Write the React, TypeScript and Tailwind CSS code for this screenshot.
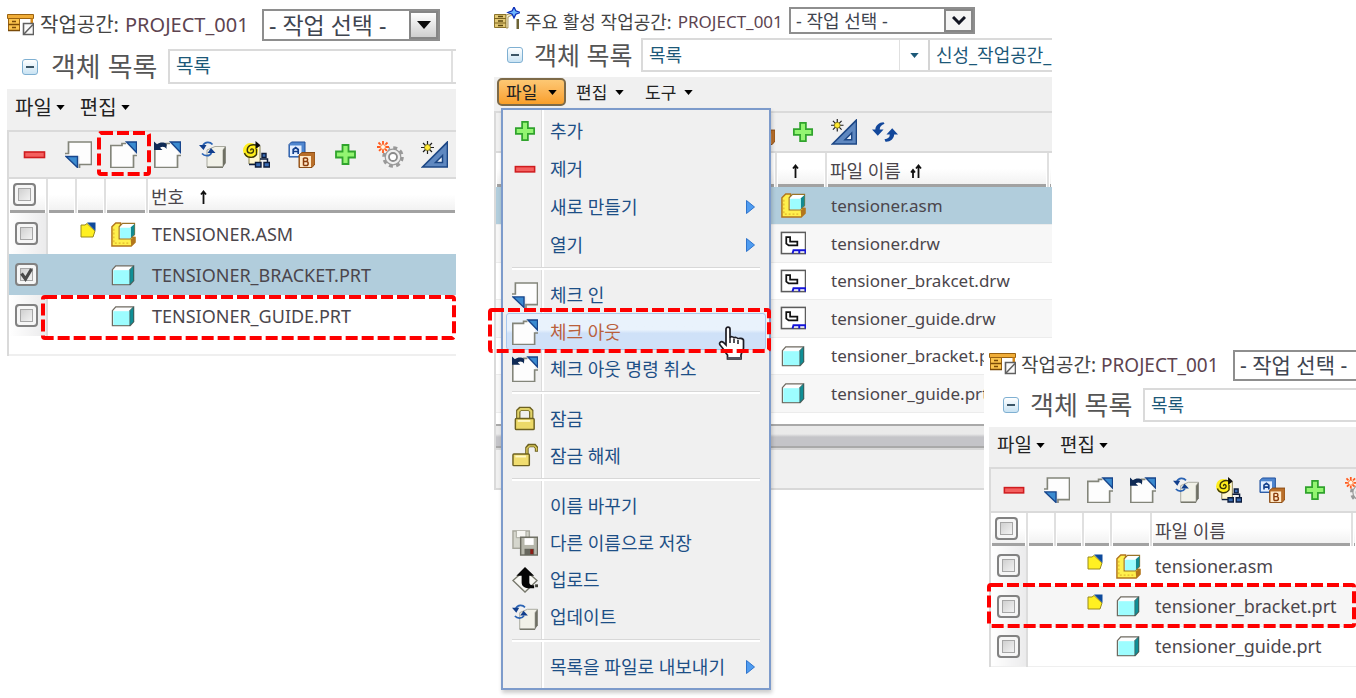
import { useState, type ReactNode } from "react";

type IconProps = { className?: string };

function Svg({ className = "size-[27px]", children }: { className?: string; children: ReactNode }) {
  return (
    <svg viewBox="0 0 27 27" className={`block shrink-0 ${className}`} fill="none" aria-hidden="true">
      {children}
    </svg>
  );
}

const MinusIcon = ({ className }: IconProps) => (
  <Svg className={className}>
    <rect x="3.5" y="11" width="20" height="5.5" fill="#f4605f" stroke="#cf1c1f" strokeWidth="1.6" />
  </Svg>
);

const PlusIcon = ({ className }: IconProps) => (
  <Svg className={className}>
    <path d="M10.5 4h6v6.500h6.500v6h-6.500v6.500h-6v-6.500H4v-6h6.500z" fill="#93f571" stroke="#30a32d" strokeWidth="1.8" />
  </Svg>
);

const CheckInIcon = ({ className }: IconProps) => (
  <Svg className={className}>
    <path d="M3.500 12V1H26.500v22.500H15V15H1v-3z" fill="#fdfdfd" />
    <path d="M0 12.500h3.500V1H26.500v22.500H14.500V27" stroke="#83857a" strokeWidth="1.700" />
    <path d="M1 15.500h11.500V26.500z" fill="#3b8bd0" stroke="#17458c" strokeWidth="1.400" />
  </Svg>
);

const CheckOutShape = () => (
  <>
    <path d="M.8 4.500H12V2.500h4l8 8v16H.8z" fill="#fdfdfd" />
    <path d="M16 2.500h-4v2H.8v22h22.700V14.500H27" stroke="#83857a" strokeWidth="1.700" />
    <path d="M16.500 1h10v10.500z" fill="#3b8bd0" stroke="#17458c" strokeWidth="1.400" />
  </>
);

const CheckOutIcon = ({ className }: IconProps) => (
  <Svg className={className}>
    <CheckOutShape />
  </Svg>
);

const UndoCheckOutIcon = ({ className }: IconProps) => (
  <Svg className={className}>
    <CheckOutShape />
    <path d="M0 .500v8.500h8.500L6 6.800c2-1.600 5-1.300 6.500 1.200V3C10 1 6 1 3 3.300z" fill="#0f2a55" />
  </Svg>
);

const UpdateIcon = ({ className }: IconProps) => (
  <Svg className={className}>
    <path d="M8 9l8-3.500h10.500L24 9v17H8z" fill="#f1f1e8" stroke="#a8a99e" strokeWidth="1" />
    <path d="M24 9l2.800-3.500V22L24 26z" fill="#6f7064" />
    <path d="M8 26.300h16" stroke="#77786c" strokeWidth="1.500" />
    <path d="M4 4.500C6 .500 11 .500 13.500 3.500M12.500 12c-2 3.500-7 3.500-9.500.500" stroke="#2a63b4" strokeWidth="1.700" />
    <path d="M0 4h7.500L4.500 9zM16.500 12H8.500l3.500-5z" fill="#123f8c" />
  </Svg>
);

const SpiralIcon = ({ className }: IconProps) => (
  <Svg className={className}>
    <path d="M6 5h11v18H6z" fill="#fff6d0" stroke="#8a8355" strokeWidth="1" />
    <circle cx="7.5" cy="9.500" r="7.500" fill="#ffee1c" />
    <path d="M8 9.500C7 7.500 10.500 7 10.500 9.700c0 3.300-6.300 3.300-6.300-.500C4.200 4.500 9 3 13 4M1.500 12c1.500 5 9 6 12 1.500V8" stroke="#3a3508" strokeWidth="1.400" />
    <path d="M12.500 0l5 4.300-5 4z" fill="#0a0a0a" />
    <path d="M6 23.500h9M17 18h7.500v5" stroke="#0d1c3c" strokeWidth="1.500" />
    <path d="M19 12.500h4v4h-4zM12.500 21.500h5.500v4.500h-5.500zM21 21.500h5.500v4.500H21z" fill="#3a6cb4" stroke="#0d1c3c" strokeWidth="1.400" />
  </Svg>
);

const BlocksIcon = ({ className }: IconProps) => (
  <Svg className={className}>
    <path d="M1 3.500L3.500 1H17v12l-2.500 3H1z" fill="#4f86cf" stroke="#1f4f9c" />
    <rect x="2" y="4.500" width="11.500" height="10.500" fill="#e4efff" />
    <path d="M5.200 13V8.500l2.500-2 2.500 2V13M5.200 10.500h5" stroke="#123f8c" strokeWidth="1.700" />
    <path d="M11 14l3-2.500h13V23l-3 3.500H11z" fill="#b96f2a" stroke="#8b4c14" />
    <rect x="12" y="15" width="11" height="11" fill="#ffe9c8" />
    <path d="M15.500 17v7.500M15.500 17H18c2.200 0 2.200 3.300 0 3.400h-2.500 3c2.200 0 2.200 4.100 0 4.100h-3" stroke="#8b3d0c" strokeWidth="1.500" />
  </Svg>
);

const GearIcon = ({ className }: IconProps) => (
  <Svg className={className}>
    <circle cx="16" cy="16" r="9.300" stroke="#999" strokeWidth="3" strokeDasharray="4 3.300" />
    <circle cx="16" cy="16" r="7.800" fill="#efefef" stroke="#999" strokeWidth="1.200" />
    <circle cx="16" cy="16" r="4" fill="#fff" stroke="#8b8b8b" strokeWidth="1.800" />
    <circle cx="6" cy="6" r="6" fill="#f6efe8" />
    <path d="M6 0v12M0 6h12M1.500 1.500l9 9M10.500 1.500l-9 9" stroke="#ff5a1f" strokeWidth="1.800" strokeDasharray="3 6" />
    <circle cx="6" cy="6" r="2.500" fill="#fff8e8" stroke="#ff7a3a" />
  </Svg>
);

const SetSquareIcon = ({ className }: IconProps) => (
  <Svg className={className}>
    <path d="M1.500 26L26.500 1v25z" fill="#5f88c0" stroke="#1d4785" strokeWidth="1.700" />
    <path d="M14.500 21.500l7-7v7z" fill="#eef4fb" stroke="#1d4785" strokeWidth="1.500" />
    <path d="M6.500 0v13M0 6.500h13M2 2l9 9M11 2l-9 9" stroke="#1c1c1c" strokeWidth="1.200" />
    <circle cx="6.500" cy="6.500" r="3" fill="#ffe932" stroke="#6b6210" strokeWidth=".800" />
  </Svg>
);

const RefreshIcon = ({ className }: IconProps) => (
  <Svg className={className}>
    <path d="M12 3.500C7.500 3.500 3.500 7 3.500 11H0l6 6.500 6-6.500H8C8 8 10 6 13 5z" fill="#12479b" />
    <path d="M14 23.500c4.500.500 9-3 9-7.500h4l-6-6.500L15 16h3.500c0 3-2 4.500-5.500 5z" fill="#12479b" />
  </Svg>
);

const PartIcon = ({ className }: IconProps) => (
  <Svg className={className}>
    <path d="M2.500 8L6 4h18.500v15.500l-3.500 4H2.500z" fill="#fdfdfd" stroke="#6f6a60" strokeWidth="1.300" />
    <path d="M20.500 8l4-4v15.500l-4 4z" fill="#0f8f96" stroke="#38605f" />
    <rect x="3.500" y="8.500" width="16.500" height="14.500" fill="#9dfdff" />
  </Svg>
);

const AssemblyIcon = ({ className }: IconProps) => (
  <Svg className={className}>
    <path d="M2 6l4-4h5v15h15v5l-4 4H2z" fill="#fff04d" stroke="#b3761c" strokeWidth="1.500" />
    <path d="M9.500 6l3.500-3.500h12.500V14L21 18.500H9.500z" fill="#fff" stroke="#9b7428" strokeWidth="1.200" />
    <path d="M21.500 19l4.500-3v6l-4 4z" fill="#b3761c" />
    <path d="M21.500 6.500L25.500 3v11l-4 3.500z" fill="#128a92" />
    <rect x="10.500" y="7" width="11" height="11" fill="#9dfdff" />
    <path d="M4 8v15h16" stroke="#e2b72e" strokeWidth="1.200" strokeDasharray="2 2" />
  </Svg>
);

const DrawingIcon = ({ className }: IconProps) => (
  <Svg className={className}>
    <rect x="1.500" y="2.500" width="25" height="22" fill="#fff" stroke="#5c5c5c" strokeWidth="1.600" />
    <path d="M6.500 7.500h4v4.500h7.500v4H9l-2.500-2z" stroke="#111" strokeWidth="1.800" />
    <path d="M13 24.500l1-3.500h12.500v3.500M20 21v3.500" stroke="#1414d8" strokeWidth="2" />
  </Svg>
);

const CheckedOutBadge = ({ className }: IconProps) => (
  <svg viewBox="0 0 16 16" className={`block ${className ?? "size-4"}`} aria-hidden="true">
    <path d="M1 3h4l2-1.500L15 9l-2 6H1z" fill="#fff022" stroke="#9a8a1a" />
    <path d="M7 .500h8.500V9z" fill="#0e4a9c" />
  </svg>
);

const LockIcon = ({ className }: IconProps) => (
  <Svg className={className}>
    <path d="M6.500 13V5L8.500 3h9.500l2 2v8" stroke="#6d6120" strokeWidth="4.500" />
    <path d="M6.500 13V5.500L9 3.300h8.500L20 5.500V13" stroke="#e0d268" strokeWidth="2.200" />
    <rect x="3.500" y="13" width="19.500" height="11.500" rx="1" fill="#ecd968" stroke="#6d6120" strokeWidth="1.500" />
    <path d="M6 15.500h13" stroke="#fff8c4" strokeWidth="2" />
  </Svg>
);

const UnlockIcon = ({ className }: IconProps) => (
  <Svg className={className}>
    <path d="M15.500 13V5l2-2.500h6L25.500 5v4" stroke="#6d6120" strokeWidth="3.600" />
    <path d="M15.500 13V5.500L18 3h5.500l2 2.500V8" stroke="#d9c95c" strokeWidth="1.500" />
    <rect x="1" y="11.500" width="17" height="12" rx="1" fill="#f0dd70" stroke="#6d6120" strokeWidth="1.500" />
    <path d="M3.500 14h11" stroke="#fff8c4" strokeWidth="2" />
  </Svg>
);

const SaveAsIcon = ({ className }: IconProps) => (
  <Svg className={className}>
    <rect x="1" y="1" width="17" height="18" fill="#d5d6cd" stroke="#a6a79c" strokeWidth="1.500" />
    <path d="M4.500 1v7h10V1" fill="#f6f6f2" stroke="#a6a79c" />
    <rect x="9" y="7.500" width="17.500" height="18.500" fill="#b6b7ab" stroke="#6c6d62" strokeWidth="1.500" />
    <rect x="13" y="8.500" width="9.500" height="7" fill="#fff" />
    <rect x="13" y="19.500" width="10" height="6.500" fill="#66675d" />
    <rect x="19" y="20" width="3" height="5" fill="#8a1c14" />
  </Svg>
);

const UploadIcon = ({ className }: IconProps) => (
  <Svg className={className}>
    <path d="M1 14L13.500 3 26 14 13.500 26z" fill="#f8f8f4" stroke="#77786c" strokeWidth="1.400" />
    <path d="M13.500 0L23 9h-5v7c0 2 1.500 3 5 3v3h-4c-6 0-9-2-9-6V9H4.500z" fill="#050505" />
    <path d="M24 18h3v3h-3z" fill="#44453c" />
  </Svg>
);

const DeskIcon = ({ className }: IconProps) => (
  <svg viewBox="0 0 27 22" className={`block shrink-0 ${className ?? "h-[22px] w-[27px]"}`} aria-hidden="true">
    <path d="M.5.5h26v4H.5z" fill="#f0ad38" stroke="#9a6210" />
    <path d="M1.500 4.500h11v12h-11z" fill="#fbc44e" stroke="#9a6210" />
    <path d="M1.500 10.500h11M1 16.500h12M5 7.500h4M5 13.500h4" stroke="#7a4a08" strokeWidth="1.500" />
    <path d="M23.500 4.500H26V10h-2.500z" fill="#d48a1c" />
    <path d="M16.500 9.500h10v11h-10z" fill="#fafafa" stroke="#606060" strokeWidth="1.600" />
    <path d="M17 20L26 10.500" stroke="#606060" strokeWidth="1.500" />
  </svg>
);

const ActiveDeskIcon = ({ className }: IconProps) => (
  <svg viewBox="0 0 26 23" className={`block shrink-0 ${className ?? "h-[23px] w-[26px]"}`} aria-hidden="true">
    <path d="M.5 7.500H12v13H.500z" fill="#e2c873" stroke="#8a732c" />
    <path d="M0 11.500h12M.5 16h12" stroke="#7a6320" />
    <path d="M4 9.500h5M4 14h5M4 18.500h5" stroke="#5b4710" strokeWidth="1.300" />
    <path d="M12 8l6-2v2l-4 2v11h-2z" fill="#f3eac6" stroke="#8a732c" strokeWidth=".700" />
    <path d="M22.500 12h2.500v10h-2.500z" fill="#6d6335" />
    <path d="M20 0l1.800 3.800L26 5.500l-4.200 1.700L20 11l-1.800-3.800L14 5.500l4.200-1.700z" fill="#6fb6ff" stroke="#0e2fb8" strokeWidth="1.300" />
  </svg>
);

const HandCursor = () => (
  <svg viewBox="0 0 27 34" className="pointer-events-none absolute top-3 right-5 h-[34px] w-[27px]" aria-hidden="true">
    <path
      d="M8 3c0-2.500 4-2.500 4 0v9c0-2 4-1.500 4 .500 0-1.700 4-1.200 4 .800 0-1.500 5.500-1.200 5.500 1.200V22c0 3-2 4-2.500 7v4H9.500v-4C7 26 5 22 2.500 19.500 0 17 3 14.500 5.500 16.500L8 19z"
      fill="#fff"
      stroke="#1c1c24"
      strokeWidth="1.700"
    />
    <path d="M12 12v5M16 13v4M20 14v4" stroke="#1c1c24" strokeWidth="1.500" />
    <path d="M9.500 31h13.500v2H9.500z" fill="#555562" />
  </svg>
);

const Caret = ({ className = "text-black" }: IconProps) => (
  <svg viewBox="0 0 10 6" className={`h-[5px] w-[9px] shrink-0 ${className}`} aria-hidden="true">
    <path d="M0 0h10L5 6z" fill="currentColor" />
  </svg>
);

const SortArrow = ({ double = false }: { double?: boolean }) => (
  <svg viewBox="0 0 14 14" className="h-[14px] w-[14px]" aria-hidden="true">
    {double && <path d="M4 14V6M2 8.500L4 6l2 2.500" stroke="#111" strokeWidth="1.800" fill="none" />}
    <path d="M9.500 14V1.500M7 4.500l2.500-3 2.500 3" stroke="#111" strokeWidth="1.800" fill="none" />
  </svg>
);

/** Dashed red frame that marks the step being explained. */
function Marker({ className }: { className: string }) {
  return (
    <svg className={`pointer-events-none absolute z-30 overflow-visible ${className}`} aria-hidden="true">
      <rect width="100%" height="100%" rx="2" fill="none" stroke="#fe0000" strokeWidth="4" strokeDasharray="12 4" />
    </svg>
  );
}

function Check({ label, defaultChecked = false }: { label: string; defaultChecked?: boolean }) {
  return (
    <label className="relative block size-[23px]">
      <input
        type="checkbox"
        aria-label={label}
        defaultChecked={defaultChecked}
        className="peer block size-[23px] appearance-none rounded-[4px] border-2 border-[#828282] bg-gradient-to-br from-[#c4c4c4] to-white shadow-[inset_0_0_0_3px_#f6f6f6,inset_0_0_0_4px_#a6a6a6]"
      />
      <svg viewBox="0 0 23 23" className="absolute inset-0 hidden size-[23px] peer-checked:block" aria-hidden="true">
        <path d="M6.500 10.500l4 5.500 6-10" fill="none" stroke="#4a4a4a" strokeWidth="3.200" />
      </svg>
    </label>
  );
}

function TaskSelect({ className, chevron = false }: { className: string; chevron?: boolean }) {
  return (
    <div className={`relative shrink-0 border-2 border-[#8e8e8e] bg-white ${className}`}>
      <select
        aria-label="작업 선택"
        className="block size-full appearance-none bg-transparent pl-[5px] text-[#3f4550] outline-none"
      >
        <option>- 작업 선택 -</option>
      </select>
      <span
        className={`pointer-events-none absolute inset-y-0 right-0 flex w-[29px] items-center justify-center border-2 border-[#868686] ${
          chevron ? "bg-[#f4f4f4]" : "bg-gradient-to-b from-white to-[#cfcfcf]"
        }`}
      >
        {chevron ? (
          <svg viewBox="0 0 14 9" className="h-[9px] w-[14px]" aria-hidden="true">
            <path d="M1 1l6 6 6-6" fill="none" stroke="#121522" strokeWidth="3" />
          </svg>
        ) : (
          <svg viewBox="0 0 14 8" className="h-[8px] w-[14px]" aria-hidden="true">
            <path d="M0 0h14L7 8z" fill="#0b0b0b" />
          </svg>
        )}
      </span>
    </div>
  );
}

function CollapseButton({ className }: { className: string }) {
  return (
    <button
      type="button"
      aria-label="접기"
      className={`flex size-4 shrink-0 items-center justify-center rounded-[3px] border border-[#7fb0d2] bg-gradient-to-b from-white to-[#c9e3f3] ${className}`}
    >
      <span className="h-[2px] w-2 bg-[#3b5566]" />
    </button>
  );
}

const toolbarIcons: { label: string; Icon: (p: IconProps) => ReactNode }[] = [
  { label: "제거", Icon: MinusIcon },
  { label: "체크 인", Icon: CheckInIcon },
  { label: "체크 아웃", Icon: CheckOutIcon },
  { label: "체크 아웃 명령 취소", Icon: UndoCheckOutIcon },
  { label: "업데이트", Icon: UpdateIcon },
  { label: "구성", Icon: SpiralIcon },
  { label: "이름 바꾸기", Icon: BlocksIcon },
  { label: "추가", Icon: PlusIcon },
  { label: "설정", Icon: GearIcon },
  { label: "새로 만들기", Icon: SetSquareIcon },
];

function HeaderCell({ children, className = "h-[34px]" }: { children?: ReactNode; className?: string }) {
  return (
    <th className="border-r-2 border-[#e0e0e0] p-0 px-px text-left font-normal last:border-r-0">
      <div
        className={`flex items-center border-b-[3px] border-[#a2a2a2] bg-gradient-to-b from-white via-white to-[#f2f2f2] ${className}`}
      >
        {children}
      </div>
    </th>
  );
}

const checkCell = "border-r-2 border-[#dcdcdc] bg-gradient-to-r from-white to-[#ebebec] p-0 pl-[6px]";

const beforeRows = [
  { name: "TENSIONER.ASM", badge: true, selected: false, Icon: AssemblyIcon },
  { name: "TENSIONER_BRACKET.PRT", badge: false, selected: true, Icon: PartIcon },
  { name: "TENSIONER_GUIDE.PRT", badge: false, selected: false, Icon: PartIcon },
];

function BeforePanel() {
  return (
    <section className="pt-[9px] pl-[7px]">
      <header className="flex h-8 items-center text-[20px]">
        <DeskIcon />
        <span className="ml-[6px] text-[#444]">작업공간:</span>
        <span className="ml-[6px] flex-1 whitespace-nowrap text-[#5d4450]">PROJECT_001</span>
        <TaskSelect className="mr-4 h-8 w-[178px] text-[23px]" />
      </header>
      <div className="mt-2 flex h-[35px] items-center">
        <CollapseButton className="ml-[15px]" />
        <h2 className="ml-[13px] w-[117px] shrink-0 text-[27px] whitespace-nowrap text-[#555]">객체 목록</h2>
        <div className="flex h-full flex-1 items-center border-2 border-r-0 border-[#dadada] pl-[6px] text-[19px] text-[#1c5878]">
          <span className="flex-1">목록</span>
          <span className="mr-[3px] h-full border-r-2 border-[#e0e0e0]" />
        </div>
      </div>
      <nav className="mt-[5px] flex h-[41px] items-center gap-[15px] bg-[#f0f0f0] pb-1 pl-2 text-[20px] text-[#222]">
        {["파일", "편집"].map((m) => (
          <button key={m} type="button" className="flex items-center gap-[4px]">
            {m}
            <Caret />
          </button>
        ))}
      </nav>
      <div className="border-l-2 border-[#dadada]">
        <div className="flex h-[49px] items-center justify-between border-y-2 border-[#dadada] bg-[#f0f0f0] pr-2 pl-3">
          {toolbarIcons.map(({ label, Icon }, i) => (
            <button key={label} type="button" aria-label={label} className="relative">
              <Icon />
              {i === 2 && <Marker className="-top-[8px] -left-[11px] h-[41px] w-[50px]" />}
            </button>
          ))}
        </div>
        <table className="w-full table-fixed border-collapse text-[18px] text-[#4b464c]">
          <colgroup>
            <col className="w-[38px]" />
            <col className="w-[29px]" />
            <col className="w-[29px]" />
            <col className="w-[42px]" />
            <col />
          </colgroup>
          <thead>
            <tr>
              <HeaderCell className="h-[34px] pl-[3px]">
                <Check label="모두 선택" />
              </HeaderCell>
              <HeaderCell />
              <HeaderCell />
              <HeaderCell />
              <HeaderCell className="h-[34px] gap-[10px] pt-[5px] pl-[2px]">
                번호 <SortArrow />
              </HeaderCell>
            </tr>
          </thead>
          <tbody>
            {beforeRows.map(({ name, badge, selected, Icon }, i) => (
              <tr key={name} className={`h-[41px] ${selected ? "bg-[#b1cddc]" : "bg-white"}`}>
                <td className={selected ? "p-0 pl-[6px]" : checkCell}>
                  <Check label={name} defaultChecked={selected} />
                </td>
                <td />
                <td className="p-0 pl-1">{badge && <CheckedOutBadge className="mb-2 size-4" />}</td>
                <td className="p-0 pl-[5px]">
                  <Icon className="size-[26px]" />
                </td>
                <td className="relative p-0 pl-[5px] whitespace-nowrap">
                  {name}
                  {i === 2 && <Marker className="top-[2px] left-[-104px] h-[41px] w-[calc(100%+102px)]" />}
                </td>
              </tr>
            ))}
          </tbody>
        </table>
        <div className="h-[20px] border-b-2 border-[#efefef]" />
      </div>
    </section>
  );
}

type MenuEntry = { label: string; Icon?: (p: IconProps) => ReactNode; submenu?: boolean; active?: boolean };

const fileMenu: MenuEntry[][] = [
  [
    { label: "추가", Icon: PlusIcon },
    { label: "제거", Icon: MinusIcon },
    { label: "새로 만들기", submenu: true },
    { label: "열기", submenu: true },
  ],
  [
    { label: "체크 인", Icon: CheckInIcon },
    { label: "체크 아웃", Icon: CheckOutIcon, active: true },
    { label: "체크 아웃 명령 취소", Icon: UndoCheckOutIcon },
  ],
  [
    { label: "잠금", Icon: LockIcon },
    { label: "잠금 해제", Icon: UnlockIcon },
  ],
  [
    { label: "이름 바꾸기" },
    { label: "다른 이름으로 저장", Icon: SaveAsIcon },
    { label: "업로드", Icon: UploadIcon },
    { label: "업데이트", Icon: UpdateIcon },
  ],
  [{ label: "목록을 파일로 내보내기", submenu: true }],
];

function FileMenu() {
  return (
    <div
      role="menu"
      className="absolute top-[31px] left-[7px] z-20 w-[270px] border-2 border-[#7d9bcb] bg-[#f0f0f0] pt-[2px] pb-[3px] text-[18px] text-[#1d4f86] shadow-[1px_3px_4px_rgba(0,0,0,0.2)]"
    >
      <span className="absolute inset-y-0 left-[38px] w-[3px] border-r-2 border-l border-r-white border-l-[#dcdcdc]" />
      {fileMenu.map((group, g) => (
        <div key={group[0].label} role="group" className={g === 0 ? "flex flex-col gap-px" : "relative"}>
          {g > 0 && (
            <div className="mx-[9px] mt-1 mb-[6px] h-[3px] border-t border-b-2 border-t-[#d8d8d8] border-b-white" />
          )}
          {group.map(({ label, Icon, submenu, active }) => (
            <button
              key={label}
              type="button"
              role="menuitem"
              className={`relative mx-[3px] flex h-[37px] w-[260px] items-center rounded-[3px] border text-left ${
                active
                  ? "border-[#a9c8ee] bg-gradient-to-b from-[#e9f2fc] from-45% to-[#cfe1f8] to-55% text-[#b9603c]"
                  : "border-transparent"
              }`}
            >
              <span className="flex w-[43px] justify-start pl-[5px]">{Icon && <Icon className="size-[26px]" />}</span>
              <span className="flex-1 whitespace-nowrap">{label}</span>
              {submenu && (
                <svg viewBox="0 0 9 14" className="mr-[10px] h-[14px] w-[9px]" aria-hidden="true">
                  <path d="M.5.5L8.500 7l-8 6.500z" fill="#4f9cf0" stroke="#2f74cc" />
                </svg>
              )}
              {active && <Marker className="-top-1 -left-[17px] h-[41px] w-[279px]" />}
              {active && <HandCursor />}
            </button>
          ))}
        </div>
      ))}
    </div>
  );
}

const activeRows = [
  { name: "tensioner.asm", Icon: AssemblyIcon },
  { name: "tensioner.drw", Icon: DrawingIcon },
  { name: "tensioner_brakcet.drw", Icon: DrawingIcon },
  { name: "tensioner_guide.drw", Icon: DrawingIcon },
  { name: "tensioner_bracket.prt", Icon: PartIcon },
  { name: "tensioner_guide.prt", Icon: PartIcon },
];

function ActivePanel() {
  const [open, setOpen] = useState(true);
  return (
    <section className="pt-[5px] pl-[38px]">
      <header className="flex h-[31px] items-center text-[17px]">
        <ActiveDeskIcon className="mb-1 h-[23px] w-[26px]" />
        <span className="ml-[5px] pt-[2px] text-[18px] whitespace-nowrap text-[#444]">주요 활성 작업공간:</span>
        <span className="ml-[6px] flex-1 pt-[2px] whitespace-nowrap text-[#5d4450]">PROJECT_001</span>
        <TaskSelect chevron className="mr-[77px] h-[27px] w-[186px] text-[18px]" />
      </header>
      <div className="mt-[2px] flex h-[34px] items-center">
        <CollapseButton className="ml-[13px]" />
        <h2 className="ml-[11px] w-[107px] shrink-0 text-[25px] whitespace-nowrap text-[#555]">객체 목록</h2>
        <div className="flex h-full min-w-0 flex-1 items-center overflow-hidden border-2 border-r-0 border-[#dadada] pl-[6px] text-[18px] text-[#1c5878]">
          <span className="flex-1">목록</span>
          <span className="flex h-full w-[29px] items-center justify-center border-l border-[#e0e0e0]">
            <Caret className="text-[#1c5878]" />
          </span>
          <span className="flex h-full w-[124px] items-center border-l-2 border-[#d4d4d4] pl-[6px] whitespace-nowrap">
            신성_작업공간_
          </span>
        </div>
      </div>
      <nav className="relative mt-[5px] flex h-[34px] items-center bg-[#f0f0f0] pl-[3px] text-[17px] text-[#222]">
        <button
          type="button"
          aria-expanded={open}
          onClick={() => setOpen(!open)}
          className="mb-1 flex h-[28px] w-[69px] items-center justify-between rounded-[5px] border-2 border-[#7d6a48] bg-gradient-to-b from-[#fdc873] to-[#f99f27] px-[7px]"
        >
          파일
          <Caret />
        </button>
        {["편집", "도구"].map((m) => (
          <button key={m} type="button" className="mb-1 ml-[10px] flex w-[59px] items-center gap-2">
            {m}
            <Caret />
          </button>
        ))}
        {open && <FileMenu />}
      </nav>
      <div className="border-l-2 border-[#dadada]">
        <div className="flex h-[42px] items-center gap-[15px] border-y-2 border-[#dadada] bg-[#f0f0f0] pl-[253px]">
          <button type="button" aria-label="이름 바꾸기">
            <BlocksIcon className="size-[26px]" />
          </button>
          <button type="button" aria-label="추가">
            <PlusIcon className="size-[26px]" />
          </button>
          <button type="button" aria-label="새로 만들기">
            <SetSquareIcon className="size-[26px]" />
          </button>
          <button type="button" aria-label="새로 고침">
            <RefreshIcon className="size-[26px]" />
          </button>
        </div>
        <table className="w-full table-fixed border-collapse text-[17px] text-[#4b464c]">
          <colgroup>
            <col className="w-[280px]" />
            <col className="w-[50px]" />
            <col />
            <col className="w-[4px]" />
          </colgroup>
          <thead>
            <tr>
              <HeaderCell />
              <HeaderCell className="h-[34px] pt-[5px] pl-2">
                <SortArrow />
              </HeaderCell>
              <HeaderCell className="h-[34px] gap-2 pt-[5px] pl-[2px] text-[18px]">
                파일 이름 <SortArrow double />
              </HeaderCell>
              <HeaderCell />
            </tr>
          </thead>
          <tbody>
            {activeRows.map(({ name, Icon }, i) => (
              <tr
                key={name}
                className={`h-[38px] border-b border-[#ececec] odd:h-[37px] ${
                  i === 0 ? "bg-[#b1cddc]" : i % 2 ? "bg-[#f7f7f7]" : "bg-white"
                }`}
              >
                <td />
                <td className="p-0 pl-1">
                  <Icon className="size-[26px]" />
                </td>
                <td className="p-0 pl-[5px] whitespace-nowrap" colSpan={2}>
                  {name}
                </td>
              </tr>
            ))}
          </tbody>
        </table>
        <div className="h-[11px]" />
        <div className="h-[24px] border-t-2 border-b-2 border-[#a9a9a9] bg-gradient-to-b from-[#eaeaea] from-40% to-[#c4c4c8] to-55%" />
        <div className="h-[42px] border-y-2 border-[#d8d8d8] bg-[#f0f0f0]" />
      </div>
    </section>
  );
}

const afterRows = [
  { name: "tensioner.asm", badge: true, Icon: AssemblyIcon },
  { name: "tensioner_bracket.prt", badge: true, Icon: PartIcon },
  { name: "tensioner_guide.prt", badge: false, Icon: PartIcon },
];

function AfterPanel() {
  return (
    <section className="relative z-10 mt-[345px] -ml-[68px] min-w-0 self-start bg-white pt-[5px] pl-[5px]">
      <header className="flex h-[31px] items-center overflow-hidden text-[19px]">
        <DeskIcon className="mb-1 h-[22px] w-[27px]" />
        <span className="ml-[5px] whitespace-nowrap text-[#444]">작업공간:</span>
        <span className="ml-[5px] flex-1 whitespace-nowrap text-[#5d4450]">PROJECT_001</span>
        <TaskSelect className="-mr-[48px] h-[31px] w-[171px] text-[21px]" />
      </header>
      <div className="mt-[7px] flex h-[34px] items-center">
        <CollapseButton className="ml-[14px]" />
        <h2 className="ml-[11px] w-[113px] shrink-0 text-[26px] whitespace-nowrap text-[#555]">객체 목록</h2>
        <div className="flex h-full flex-1 items-center border-2 border-r-0 border-[#dadada] pl-[6px] text-[18px] text-[#1c5878]">
          목록
        </div>
      </div>
      <nav className="mt-[5px] flex h-[40px] items-center gap-[15px] bg-[#f0f0f0] pb-1 pl-2 text-[19px] text-[#222]">
        {["파일", "편집"].map((m) => (
          <button key={m} type="button" className="flex items-center gap-[4px]">
            {m}
            <Caret />
          </button>
        ))}
      </nav>
      <div className="border-l-2 border-[#dadada]">
        <div className="flex h-[46px] items-center gap-[17px] overflow-hidden border-y-2 border-[#dadada] bg-[#f0f0f0] pl-[10px]">
          {toolbarIcons.slice(0, 9).map(({ label, Icon }) => (
            <button key={label} type="button" aria-label={label} className="shrink-0">
              <Icon className="size-[26px]" />
            </button>
          ))}
        </div>
        <table className="w-full table-fixed border-collapse text-[18px] text-[#4b464c]">
          <colgroup>
            <col className="w-[36px]" />
            <col className="w-[28px]" />
            <col className="w-[28px]" />
            <col className="w-[28px]" />
            <col className="w-[40px]" />
            <col />
            <col className="w-[4px]" />
          </colgroup>
          <thead>
            <tr>
              <HeaderCell className="h-[33px] pl-[3px]">
                <Check label="모두 선택" />
              </HeaderCell>
              <HeaderCell className="h-[33px]" />
              <HeaderCell className="h-[33px]" />
              <HeaderCell className="h-[33px]" />
              <HeaderCell className="h-[33px]" />
              <HeaderCell className="h-[33px] pt-[5px] pl-[2px]">파일 이름</HeaderCell>
              <HeaderCell className="h-[33px]" />
            </tr>
          </thead>
          <tbody>
            {afterRows.map(({ name, badge, Icon }, i) => (
              <tr key={name} className="h-[40px] border-b border-[#efefef] bg-white even:bg-[#f6f6f6]">
                <td className={checkCell}>
                  <Check label={name} />
                </td>
                <td />
                <td />
                <td className="p-0 pl-1">{badge && <CheckedOutBadge className="mb-2 size-4" />}</td>
                <td className="p-0 pl-1">
                  <Icon className="size-[26px]" />
                </td>
                <td className="relative p-0 pl-1 whitespace-nowrap" colSpan={2}>
                  {name}
                  {i === 1 && <Marker className="-top-[2px] left-[-162px] h-[41px] w-[calc(100%+160px)]" />}
                </td>
              </tr>
            ))}
          </tbody>
        </table>
      </div>
    </section>
  );
}

export default function App() {
  return (
    <main className="grid min-h-screen grid-cols-[456fr_596fr_304fr] items-start overflow-hidden bg-white font-['Noto_Sans','Noto_Sans_CJK_KR',sans-serif] leading-none">
      <BeforePanel />
      <ActivePanel />
      <AfterPanel />
    </main>
  );
}
